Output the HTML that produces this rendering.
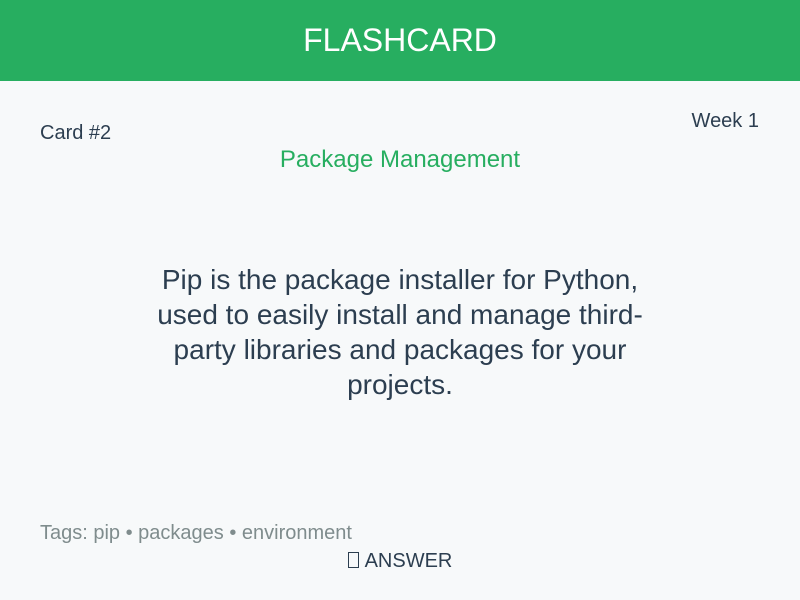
<!DOCTYPE html>
<html><head><style>
body{margin:0;width:800px;height:600px;background:#f7f9fa;font-family:"Liberation Sans",sans-serif;position:relative;overflow:hidden;color:#2c3e50}
.h{position:absolute;left:0;top:0;width:800px;height:81px;background:#27ae60;color:#fff;font-size:32px;text-align:center;line-height:80px}
.a{position:absolute;white-space:nowrap}
</style></head><body>
<div class="h">FLASHCARD</div>
<div class="a" style="left:40px;top:122px;font-size:20px">Card #2</div>
<div class="a" style="right:41px;top:110px;font-size:20px">Week 1</div>
<div class="a" style="left:0;width:800px;text-align:center;top:146px;font-size:24px;color:#27ae60">Package Management</div>
<div class="a" style="left:150px;width:500px;text-align:center;top:262px;font-size:28px;line-height:35px;white-space:normal">Pip is the package installer for Python, used to easily install and manage third-party libraries and packages for your projects.</div>
<div class="a" style="left:40px;top:522px;font-size:20px;color:#7f8c8d">Tags: pip • packages • environment</div>
<div class="a" style="left:0;width:800px;text-align:center;top:550px;font-size:20px"><span style="display:inline-block;width:9px;height:14px;border:1px solid #2c3e50;vertical-align:-1px;margin-right:6px"></span>ANSWER</div>
</body></html>
